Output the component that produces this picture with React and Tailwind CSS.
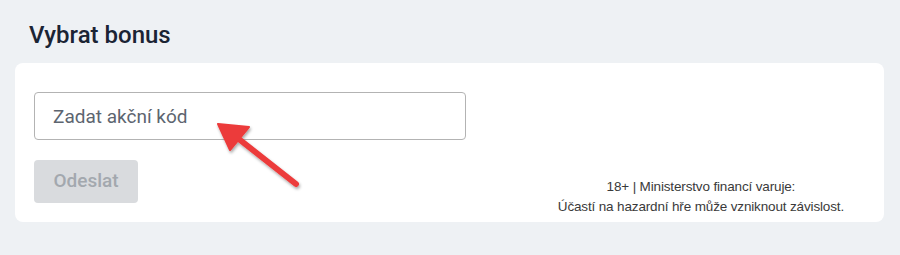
import React from 'react';

const Arrow = () => (
  <svg
    className="absolute left-[205px] top-[112px] pointer-events-none"
    width="110"
    height="90"
    viewBox="0 0 110 90"
  >
    <defs>
      <filter id="sh" x="-20%" y="-20%" width="140%" height="140%">
        <feDropShadow dx="1" dy="2" stdDeviation="1.5" floodColor="#000" floodOpacity="0.35" />
      </filter>
    </defs>
    <g filter="url(#sh)">
      <line x1="91" y1="72" x2="30" y2="24" stroke="#ec3b3b" strokeWidth="6" strokeLinecap="round" />
      <polygon points="13,12 44,15 25,38" fill="#ec3b3b" stroke="#ec3b3b" strokeWidth="2" strokeLinejoin="round" />
    </g>
  </svg>
);

export default function App() {
  return (
    <div className="relative w-[900px] h-[255px] bg-[#eef1f4] px-[15px] pt-[20px] font-['Roboto',sans-serif]">
      <h2 className="pl-[14px] text-[24px] font-medium leading-[30px] text-[#1b2434]">Vybrat bonus</h2>

      <div className="mt-[13px] w-[869px] h-[159px] rounded-lg bg-white pl-[19px] pr-[40px] pt-[29px] flex justify-between">
        <div className="flex flex-col gap-[20px]">
          <input
            type="text"
            placeholder="Zadat akční kód"
            className="w-[432px] h-[48px] rounded border border-[#b3b3b3] px-[18px] text-[19px] text-[#333] placeholder:text-[#5d6570] outline-none"
          />
          <button
            disabled
            className="w-[104px] h-[43px] rounded bg-[#d9dbde] text-[19px] font-medium text-[#a3a8ae]"
          >
            Odeslat
          </button>
        </div>

        <div className="self-end pb-[5px] text-center text-[13.5px] tracking-[-0.15px] leading-[20px] text-[#3a3a3a] font-['Liberation_Sans',Arial,sans-serif]">
          <p>18+ | Ministerstvo financí varuje:</p>
          <p>Účastí na hazardní hře může vzniknout závislost.</p>
        </div>
      </div>

      <Arrow />
    </div>
  );
}
